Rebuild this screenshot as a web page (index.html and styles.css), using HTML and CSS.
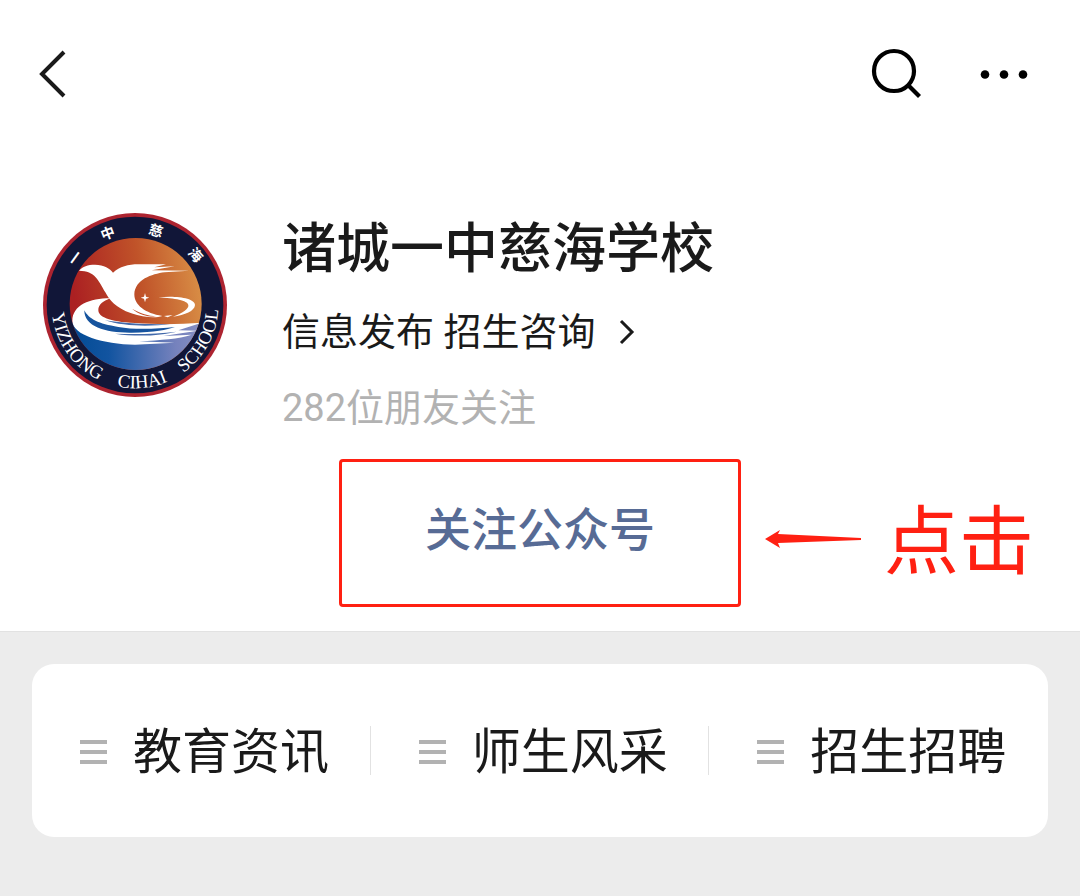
FILE: index.html
```html
<!DOCTYPE html>
<html lang="zh-CN">
<head>
<meta charset="utf-8">
<meta name="viewport" content="width=device-width, initial-scale=1">
<title>诸城一中慈海学校</title>
<link rel="stylesheet" href="styles.css">
</head>
<body>
<main class="page">
  <section class="account">
    <header class="topbar">
      <button class="icon-btn" type="button" aria-label="返回">
        <svg width="28" height="48" viewBox="0 0 28 48"><path d="M25 2 3 24 25 46" fill="none" stroke="#1a1a1a" stroke-width="4"/></svg>
      </button>
      <div class="topbar-actions">
        <button class="icon-btn" type="button" aria-label="搜索">
          <svg width="52" height="52" viewBox="0 0 52 52"><g fill="none" stroke="#000" stroke-width="4.200"><circle cx="24" cy="23" r="20"/><path d="M38 37 49.500 48.500"/></g></svg>
        </button>
        <button class="icon-btn" type="button" aria-label="更多">
          <svg width="48" height="10" viewBox="0 0 48 10"><circle cx="5" cy="5.500" r="4.300"/><circle cx="24" cy="5.500" r="4.300"/><circle cx="43" cy="5.500" r="4.300"/></svg>
        </button>
      </div>
    </header>

    <div class="profile">
      <svg class="emblem" viewBox="24 24 552 552" role="img" aria-label="一中慈海 校徽">
        <defs>
          <linearGradient id="sky" x1="0" x2="1" y1="0.150" y2="0"><stop offset="0" stop-color="#ab2022"/><stop offset="0.500" stop-color="#c05329"/><stop offset="1" stop-color="#dc974a"/></linearGradient>
          <linearGradient id="sea" x1="0" x2="1"><stop offset="0" stop-color="#004a94"/><stop offset="0.300" stop-color="#1254a0"/><stop offset="0.800" stop-color="#7682bd"/><stop offset="1" stop-color="#8790c4"/></linearGradient>
          <clipPath id="disc"><circle cx="302" cy="297" r="198"/></clipPath>
          <path id="ring" d="M50 300A250 250 0 0 0 550 300"/>
        </defs>
        <circle cx="300" cy="300" r="276" fill="#ad2430"/>
        <circle cx="300" cy="300" r="265" fill="#111638"/>
        <g clip-path="url(#disc)">
          <rect x="100" y="95" width="404" height="404" fill="url(#sky)"/>
          <path d="M100 340C150 400 220 370 290 360C370 380 440 375 504 350V500H100Z" fill="url(#sea)"/>
          <path d="M225 280C165 280 112 300 112 348C112 390 205 418 300 419L418 413L312 409C380 405 430 402 470 389L385 393L488 377L430 376L500 353C440 357 380 360 300 354C220 350 190 335 190 315C190 298 205 289 225 280Z" fill="#fff"/>
          <path d="M148 316C147 366 214 384 290 383C360 382 395 375 420 366C370 371 300 375 250 366C190 356 162 343 148 316Z" fill="#17549e"/>
          <path d="M210 346C265 365 350 365 405 357C350 359 280 357 210 346ZM240 386C310 397 380 391 425 380C370 386 310 389 240 386Z" fill="#4269aa"/>
          <path d="M132 197C143 184 158 179 180 179C207 180 225 190 234 203C254 185 280 178 310 178L393 178L358 187L419 184L350 196L462 197L389 202C350 207 300 224 298 268C298 300 330 325 382 333C363 340 326 338 289 325C242 309 224 286 211 262C190 226 181 198 132 197Z" fill="#fff"/>
          <path d="M291 311C319 326 338 332 365 334C340 336 315 331 291 311Z" fill="#c34d26"/>
          <path d="M370 277C420 271 480 278 480 300C479 318 450 330 414 335C445 323 462 311 460 300C457 286 420 280 370 277ZM387 333 413 330 398 337Z" fill="#fff"/>
          <path d="M330 264 333 275 343 278 333 281 330 292 327 281 317 278 327 275Z" fill="#fff"/>
        </g>
        <g class="emblem-cn">
          <text transform="translate(121 159) rotate(-54)" y="15">一</text>
          <text transform="translate(218 85) rotate(-21)" y="15">中</text>
          <text transform="translate(363 77) rotate(17)" y="15">慈</text>
          <text transform="translate(482 150) rotate(49)" y="15">海</text>
        </g>
        <g class="emblem-en">
          <text><textPath href="#ring" startOffset="19.500%">YIZHONG</textPath></text>
          <text><textPath href="#ring" startOffset="53%">CIHAI</textPath></text>
          <text><textPath href="#ring" startOffset="84%">SCHOOL</textPath></text>
        </g>
      </svg>
      <div class="info">
        <h1 class="name">诸城一中慈海学校</h1>
        <a class="desc" href="#about">信息发布 招生咨询
          <svg width="16" height="26" viewBox="0 0 16 26"><path d="M2 2 13 13 2 24" fill="none" stroke="#1a1a1a" stroke-width="3"/></svg>
        </a>
        <p class="friends">282位朋友关注</p>
      </div>
    </div>

    <div class="follow-row">
      <button class="follow" type="button">关注公众号</button>
      <div class="hint">
        <svg width="97" height="18" viewBox="0 0 97 18"><path d="M0 9 15 0 13 4 96 8V10L13 13 15 18Z" fill="#ff2012"/></svg>
        <span class="hint-text">点击</span>
      </div>
    </div>
  </section>

  <nav class="menu" aria-label="公众号菜单">
    <button class="menu-item" type="button"><svg width="27" height="26" viewBox="0 0 27 26"><path d="M0 2H27M0 12H27M0 22H27" stroke="#b2b2b2" stroke-width="4"/></svg>教育资讯</button>
    <button class="menu-item" type="button"><svg width="27" height="26" viewBox="0 0 27 26"><path d="M0 2H27M0 12H27M0 22H27" stroke="#b2b2b2" stroke-width="4"/></svg>师生风采</button>
    <button class="menu-item" type="button"><svg width="27" height="26" viewBox="0 0 27 26"><path d="M0 2H27M0 12H27M0 22H27" stroke="#b2b2b2" stroke-width="4"/></svg>招生招聘</button>
  </nav>
</main>
</body>
</html>
```

FILE: styles.css
```css
* {
  box-sizing: border-box;
}

body {
  margin: 0;
  background: #ececec;
  color: #1a1a1a;
  font-family: Roboto, "Noto Sans CJK SC", sans-serif;
}

button {
  margin: 0;
  padding: 0;
  border: 0;
  background: none;
  color: inherit;
  font: inherit;
  cursor: pointer;
}

svg {
  display: block;
  flex: none;
}

.account {
  padding-bottom: 24px;
  border-bottom: 1px solid #e2e2e2;
  background: #fff;
}

.topbar {
  display: flex;
  align-items: center;
  justify-content: space-between;
  padding: 48px 52px 0 39px;
}

.topbar-actions {
  display: flex;
  align-items: center;
  gap: 58px;
}

.profile {
  display: flex;
  align-items: flex-start;
  gap: 55px;
  padding: 113px 43px 0;
}

.emblem {
  width: 184px;
  height: 184px;
}

.emblem-cn {
  fill: #fff;
  font-family: "Noto Sans CJK SC", sans-serif;
  font-size: 42px;
  font-weight: 700;
  text-anchor: middle;
}

.emblem-en {
  fill: #fff;
  font-family: "Liberation Serif", serif;
  font-size: 56px;
  text-anchor: middle;
}

.name {
  margin: 0;
  padding-top: 2px;
  font-size: 54px;
  font-weight: 500;
  line-height: 70px;
}

.desc {
  display: flex;
  align-items: center;
  gap: 24px;
  margin-top: 18px;
  color: inherit;
  font-size: 38px;
  line-height: 58px;
  text-decoration: none;
}

.friends {
  margin: 18px 0 0;
  color: #b2b2b2;
  font-size: 38px;
  line-height: 58px;
}

.follow-row {
  display: grid;
  grid-template-columns: 1fr 402px 1fr;
  align-items: center;
  margin-top: 22px;
}

.follow {
  grid-column: 2;
  padding: 36px 0 42px;
  border: 3px solid #ff2012;
  border-radius: 4px;
  color: #576b95;
  font-size: 46px;
  font-weight: 500;
  line-height: 64px;
}

.hint {
  display: flex;
  align-items: center;
  gap: 22px;
  padding: 12px 0 0 24px;
  color: #ff2012;
  font-size: 75px;
  line-height: 80px;
  white-space: nowrap;
}

.hint-text {
  padding-top: 6px;
}

.menu {
  display: grid;
  grid-template-columns: repeat(3, 1fr);
  margin: 32px;
  padding: 62px 0;
  border-radius: 22px;
  background: #fff;
}

.menu-item {
  display: flex;
  align-items: center;
  gap: 26px;
  padding: 5px 0 0 48px;
  font-size: 49px;
  line-height: 44px;
  white-space: nowrap;
}

.menu-item:not(:last-child) {
  border-right: 1px solid #e2e2e2;
}
```
